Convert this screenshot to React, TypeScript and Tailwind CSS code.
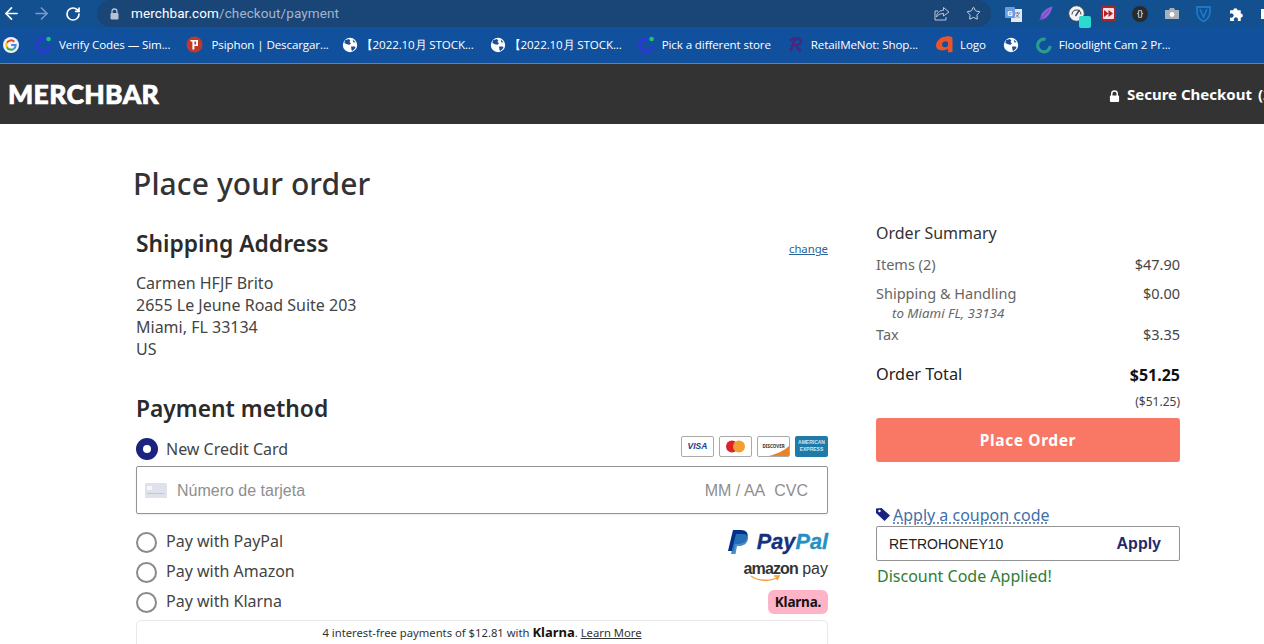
import React from "react";
import { ArrowLeft, ArrowRight, RotateCw, Star } from "lucide-react";

const Globe = () => (
  <svg width="16" height="16" viewBox="0 0 16 16" className="shrink-0">
    <circle cx="8" cy="8" r="7.2" fill="#fff" />
    <path d="M3 3.2 6.8 2l1.600 1.600-1 1.400 1.600 1.200-1.400 1.600-2.600-.6L2.400 6zM9 9.400l3.600.2 1 1.200-2.800 3-1.200-.4zM10.600 2.400l3 2.800-2.200.2z" fill="#1a4f96" />
  </svg>
);

const Swirl = ({ color = "#2d37d6", dot = "#22c07a" }: { color?: string; dot?: string }) => (
  <svg width="18" height="18" viewBox="0 0 18 18" className="shrink-0">
    <path d="M10.500 3.400A6.300 6.300 0 1 0 15.200 10" fill="none" stroke={color} strokeWidth="3.200" />
    <circle cx="14.600" cy="3" r="2.300" fill={dot} />
  </svg>
);

const GoogleG = () => (
  <svg width="16" height="16" viewBox="0 0 16 16" className="shrink-0">
    <circle cx="8" cy="8" r="8" fill="#f2f2f2" />
    <g fill="none" strokeWidth="2">
      <path d="M11.300 4.700A4.700 4.700 0 0 0 3.900 5.800" stroke="#ea4335" />
      <path d="M3.900 5.800a4.700 4.700 0 0 0 0 4.400" stroke="#fbbc05" />
      <path d="M3.900 10.200a4.700 4.700 0 0 0 7 1.500" stroke="#34a853" />
      <path d="M10.900 11.700A4.700 4.700 0 0 0 12.700 8H8.200" stroke="#4285f4" />
    </g>
  </svg>
);

const PsiphonIcon = () => (
  <svg width="17" height="17" viewBox="0 0 17 17" className="shrink-0">
    <circle cx="8.500" cy="8.500" r="8" fill="#c0392b" />
    <path d="M4.500 4h7.500v6H8.400v3.500H6.400V5.500H4.500zM8.400 5.500v3h1.700v-3z" fill="#fff" />
  </svg>
);

const RIcon = () => (
  <svg width="18" height="18" viewBox="0 0 18 18" className="shrink-0">
    <path d="M3 5c2-3 11-4 11 .5 0 2.500-3 3.500-6 3.700 2 1 3 5 6 5.300M8 3 3.500 15" fill="none" stroke="#47277f" strokeWidth="2.400" />
  </svg>
);

const LogoIcon = () => (
  <svg width="17" height="17" viewBox="0 0 17 17" className="shrink-0">
    <path d="M4 2.500C6 .8 11 .2 13 .2c2.500 0 3.500 1 3.500 3v12.600c-1.500.6-4 .8-4.500.2V13c-3 1.500-8 2.500-11-.5C-1 10 0 6 4 2.500z" fill="#e8552d" />
    <path d="M6 8.500c0-2 1.500-3.300 3.200-3.300 1 0 2 .4 2.800 1v3.800c-1 .8-2 1.300-3.200 1.300-1.700 0-2.800-1-2.800-2.800z" fill="#11509c" />
  </svg>
);

const Bookmark = ({ icon, label, gapClass }: { icon: React.ReactNode; label: string; gapClass: string }) => (
  <div className={`flex items-center ${gapClass}`}>
    {icon}
    <span className="whitespace-nowrap">{label}</span>
  </div>
);

const CardMark = ({ children, className }: { children: React.ReactNode; className: string }) => (
  <div className={`flex h-[21px] w-[33px] items-center justify-center overflow-hidden rounded-[2px] ${className}`}>{children}</div>
);

const Radio = ({ on = false }: { on?: boolean }) =>
  on ? (
    <span className="flex h-[22px] w-[22px] items-center justify-center rounded-full bg-[#1a237e]">
      <span className="h-2 w-2 rounded-full bg-white" />
    </span>
  ) : (
    <span className="h-[21px] w-[21px] rounded-full border-2 border-[#8a8a8a] bg-white" />
  );

const SummaryRow = ({ label, value, className = "" }: { label: string; value: string; className?: string }) => (
  <div className={`flex justify-between text-[14.500px] leading-[20px] ${className}`}>
    <span className="text-[#666]">{label}</span>
    <span className="text-[#444]">{value}</span>
  </div>
);

export default function App() {
  return (
    <div className="h-[644px] w-[1264px] overflow-hidden bg-white font-['Noto_Sans','Open_Sans',sans-serif] text-[#333]">
      {/* browser chrome */}
      <div className="flex h-[27px] items-center bg-[#12508f]">
        <div className="flex w-[97px] items-center pl-[2px] text-white">
          <ArrowLeft size={19} strokeWidth={2.200} />
          <ArrowRight size={19} strokeWidth={2} className="ml-[11px] text-[#7c9ccb]" />
          <RotateCw size={16} strokeWidth={2.600} className="ml-[14px]" />
        </div>
        <div className="flex h-[27px] w-[894px] items-center rounded-l-[14px] rounded-r-[14px] bg-[#1a4577] font-['Roboto',sans-serif] text-[13.500px] tracking-[0.100px]">
          <svg width="11" height="12" viewBox="0 0 11 12" className="ml-[12px] mr-[11px]">
            <path d="M3 5V3.500a2.500 2.500 0 0 1 5 0V5" fill="none" stroke="#b6c2d2" strokeWidth="1.300" />
            <rect x="1.500" y="5" width="8" height="6.500" rx="1" fill="#b6c2d2" />
          </svg>
          <span className="text-white">merchbar.com</span>
          <span className="text-[#a4b5cc]">/checkout/payment</span>
          <div className="ml-auto mr-[10px] flex items-center gap-[16px]">
            <svg width="16" height="15" viewBox="0 0 16 15" fill="none" stroke="#bac6d6" strokeWidth="1">
              <path d="M9.500 1.500 15 6l-5.500 4V7.500C6 7.500 3.500 9 2.500 11c0-4 3-6.500 7-6.800z" />
              <path d="M12 11v3H1V5h3" />
            </svg>
            <Star size={15} strokeWidth={1.500} className="text-[#d6dde8]" />
          </div>
        </div>
        <div className="relative flex flex-1 items-center gap-[16px] pl-[14px]">
          <svg width="17" height="16" viewBox="0 0 17 16" className="shrink-0">
            <rect x="6" y="3" width="11" height="13" fill="#e3e8f2" />
            <path d="M10 7h5M12.500 6v1.500M14 7.500c-1 2-2 3.500-3.500 4M11 8.500c1 1.500 2 2.500 3.500 3" fill="none" stroke="#5a6b86" strokeWidth="0.800" />
            <rect x="0" y="1" width="10" height="11" rx="1" fill="#6c9bde" />
            <text x="2.300" y="9.500" fontSize="8" fontWeight="700" fill="#fff" fontFamily="Roboto">G</text>
          </svg>
          <svg width="15" height="16" viewBox="0 0 15 16" className="shrink-0">
            <path d="M14.500.500C9 1.500 3 6 2.500 12L1 15.500l1.500-2C8 14 13 8 14.500.500z" fill="#8f5fd8" />
            <path d="M11 4 3 13" stroke="#5d3aa8" strokeWidth="0.700" />
          </svg>
          <span className="relative h-4 w-4 shrink-0">
            <svg width="17" height="17" viewBox="0 0 17 17" className="absolute -left-[1px] -top-[1px]">
              <circle cx="8.500" cy="8.500" r="7.800" fill="#f2f4f6" stroke="#3d4550" strokeWidth="0.900" />
              <path d="M4 9.500a4.500 4.500 0 0 1 9 0" fill="none" stroke="#3d4550" strokeWidth="1.100" />
              <path d="M7.500 11 11.500 5" stroke="#3d4550" strokeWidth="1.400" />
            </svg>
            <span className="absolute left-[10px] top-[10px] h-3 w-3 rounded-[2px] bg-[#2ed9cf]" />
          </span>
          <span className="flex h-[15px] w-[15px] shrink-0 items-center justify-center rounded-[3px] border-[2px] border-[#b3212c] bg-[#f4e3e4]">
            <svg width="9" height="7" viewBox="0 0 9 7"><path d="M0 0 4.500 3.500 0 7zM4.500 0 9 3.500 4.500 7z" fill="#b3212c" /></svg>
          </span>
          <span className="flex h-4 w-4 shrink-0 items-center justify-center rounded-full bg-[#2a2a2a] text-[8px] text-white">{"{}"}</span>
          <svg width="16" height="13" viewBox="0 0 16 13" className="shrink-0">
            <path d="M1 3h4l1-2h4l1 2h4v9H1z" fill="#a9b0b9" />
            <circle cx="8" cy="7.500" r="2.400" fill="#fff" />
          </svg>
          <svg width="15" height="16" viewBox="0 0 15 16" className="shrink-0">
            <path d="M1 1h13v5c0 4-3 8-6.500 9.500C4 14 1 10 1 6zM4 3l3.500 8L11 3" fill="none" stroke="#1c78c8" strokeWidth="1.800" />
          </svg>
          <svg width="16" height="16" viewBox="0 0 15 15" className="ml-[2px] shrink-0">
            <path d="M1 4h3a2 2 0 1 1 4 0h3v3a2 2 0 1 1 0 4v3H8a2 2 0 1 0-3 0H1v-3.500a2 2 0 1 0 0-3z" fill="#fff" />
          </svg>
          <span className="absolute right-0 top-[3px] h-[10px] w-[3px] bg-white" />
        </div>
      </div>
      <div className="flex h-[37px] items-center border-b border-[#5a83b8] bg-[#11509c] pl-[3px] font-['Open_Sans',sans-serif] text-[11.600px] tracking-[-0.120px] text-white">
        <GoogleG />
        <div className="ml-[15px]"><Bookmark icon={<Swirl />} label="Verify Codes — Sim..." gapClass="gap-[7px]" /></div>
        <div className="ml-[16px]"><Bookmark icon={<PsiphonIcon />} label="Psiphon | Descargar..." gapClass="gap-[8px]" /></div>
        <div className="ml-[13px]"><Bookmark icon={<Globe />} label="【2022.10月 STOCK..." gapClass="gap-[3px]" /></div>
        <div className="ml-[16px]"><Bookmark icon={<Globe />} label="【2022.10月 STOCK..." gapClass="gap-[3px]" /></div>
        <div className="ml-[15px]"><Bookmark icon={<Swirl />} label="Pick a different store" gapClass="gap-[7px]" /></div>
        <div className="ml-[16px]"><Bookmark icon={<RIcon />} label="RetailMeNot: Shop..." gapClass="gap-[6px]" /></div>
        <div className="ml-[18px]"><Bookmark icon={<LogoIcon />} label="Logo" gapClass="gap-[7px]" /></div>
        <div className="ml-[17px]"><Globe /></div>
        <div className="ml-[16px]"><Bookmark icon={<Swirl color="#2a9d8f" dot="transparent" />} label="Floodlight Cam 2 Pr..." gapClass="gap-[6px]" /></div>
      </div>

      {/* site header */}
      <div className="flex h-[60px] items-center justify-between overflow-hidden bg-[#333] pl-[8px] text-white">
        <span className="font-['Lato',sans-serif] text-[26.500px] font-black leading-none tracking-[0.350px] [-webkit-text-stroke:0.7px_white]">MERCHBAR</span>
        <div className="flex w-[155px] shrink-0 items-center gap-[7px] overflow-hidden">
          <svg width="11" height="14" viewBox="0 0 12 14" className="mt-[4px] shrink-0">
            <path d="M3 7V4.500a3 3 0 0 1 6 0V7" fill="none" stroke="#fff" strokeWidth="1.600" />
            <rect x="1" y="6.500" width="10" height="7" rx="1" fill="#fff" />
          </svg>
          <span className="whitespace-nowrap text-[15px] font-bold">Secure Checkout <span className="ml-[2px]">(2)</span></span>
        </div>
      </div>

      {/* page */}
      <div className="flex pl-[133px]">
        <div className="w-[695px]">
          <h1 className="mt-[39px] text-[30px] font-medium leading-[42px] tracking-[0.100px] text-[#333]">Place your order</h1>
          <div className="pl-[3px]">
            <div className="mt-[24px] flex items-end justify-between">
              <h2 className="text-[22.800px] font-semibold leading-[30px] text-[#2b2b2b]">Shipping Address</h2>
              <a className="mb-[1px] text-[11.300px] text-[#2a6496] underline">change</a>
            </div>
            <div className="mt-[13px] text-[16px] leading-[22px] text-[#444]">
              <div>Carmen HFJF Brito</div>
              <div>2655 Le Jeune Road Suite 203</div>
              <div>Miami, FL 33134</div>
              <div>US</div>
            </div>
            <h2 className="mt-[34px] text-[22.800px] font-semibold leading-[30px] text-[#2b2b2b]">Payment method</h2>

            <div className="relative mt-[13px] flex items-center justify-between">
              <div className="flex items-center gap-[8px] text-[16px] text-[#444]">
                <Radio on />
                <span>New Credit Card</span>
              </div>
              <div className="-mt-[6px] flex gap-[5px]">
                <CardMark className="border border-[#aaa] bg-white font-['Liberation_Sans',sans-serif] text-[8.500px] font-bold italic text-[#1a3a8a]">VISA</CardMark>
                <CardMark className="border border-[#aaa] bg-white">
                  <svg width="21" height="13" viewBox="0 0 21 13">
                    <circle cx="7" cy="6.500" r="6" fill="#d9222a" />
                    <circle cx="14" cy="6.500" r="6" fill="#f2a033" />
                  </svg>
                </CardMark>
                <CardMark className="relative border border-[#aaa] bg-white text-[4.500px] font-bold text-[#333]">
                  DISCOVER
                  <svg width="31" height="19" viewBox="0 0 31 19" className="absolute left-0 top-0">
                    <path d="M31 9C26 14 18 17 11 19h20z" fill="#e8832a" />
                  </svg>
                </CardMark>
                <CardMark className="bg-[#1f7aa8] text-center font-['Liberation_Sans',sans-serif] text-[5px] font-bold leading-[7px] text-[#cfe6f2]">AMERICAN<br />EXPRESS</CardMark>
              </div>
            </div>

            <div className="mt-[5px] flex h-[48px] items-center rounded-[2px] border border-[#949494] bg-white pl-[8px] pr-[19px] pt-[1px] font-['Liberation_Sans',sans-serif] text-[16px] text-[#8e8e8e] shadow-[0_1px_2px_rgba(0,0,0,0.08)]">
              <svg width="22" height="15" viewBox="0 0 22 15" className="mr-[10px]">
                <rect width="22" height="15" rx="1.500" fill="#dfe2ea" />
                <rect x="2" y="3" width="5" height="4" fill="#f6f7fa" />
                <rect x="2" y="10" width="17" height="1" fill="#c3c7d2" />
              </svg>
              <span>Número de tarjeta</span>
              <span className="ml-auto">MM / AA</span>
              <span className="ml-[9px]">CVC</span>
            </div>

            <div className="mt-[13px] flex h-[30px] items-center justify-between">
              <div className="flex items-center gap-[9px] text-[16px] text-[#444]">
                <Radio />
                <span className="-mt-[3px]">Pay with PayPal</span>
              </div>
              <div className="flex items-center gap-[8px] font-['Liberation_Sans',sans-serif] text-[21.700px] font-bold italic leading-none [-webkit-text-stroke:0.3px_currentColor]">
                <svg width="21" height="24" viewBox="0 0 21 24" className="-mt-[1px]">
                  <path d="M5 0h8c5 0 7.500 3 6.500 7-1 5-5 7-9 7H7L5.500 21H0z" fill="#003087" />
                  <path d="M8 4h7c3 0 5.500 1.500 5 5-1 5-5 7-8.500 7H9l-1.500 8H3l1-5z" fill="#2a7ac0" fillOpacity="0.85" />
                </svg>
                <span><span className="text-[#14307e]">Pay</span><span className="text-[#2790c3]">Pal</span></span>
              </div>
            </div>
            <div className="flex h-[30px] items-center justify-between">
              <div className="flex items-center gap-[9px] text-[16px] text-[#444]">
                <Radio />
                <span className="-mt-[2px]">Pay with Amazon</span>
              </div>
              <div className="relative -mt-[7px] font-['Liberation_Sans',sans-serif] text-[16px] leading-none text-[#333]">
                <span className="font-bold tracking-[-0.900px]">amazon</span> <span className="font-normal">pay</span>
                <svg width="30" height="8" viewBox="0 0 30 8" className="absolute left-[6px] top-[14px]">
                  <path d="M1 1c7 5 19 6 27 1M24 1l5 0-2 4" fill="none" stroke="#f29d38" strokeWidth="1.400" />
                </svg>
              </div>
            </div>
            <div className="flex h-[30px] items-center justify-between">
              <div className="flex items-center gap-[9px] text-[16px] text-[#444]">
                <Radio />
                <span className="-mt-[2px]">Pay with Klarna</span>
              </div>
              <span className="flex h-[24px] w-[60px] items-center justify-center rounded-[6px] bg-[#ffb3c7] text-[13.500px] font-bold tracking-[-0.200px] text-[#17120f]">Klarna.</span>
            </div>
            <div className="mt-[3px] flex h-[40px] items-start justify-center rounded-[5px] border border-[#e8e8e8] pt-[2px] text-[11.250px] leading-[18px] text-[#333]">
              <span>4 interest-free payments of $12.81 with <b className="text-[13px] text-[#17120f]">Klarna</b>. <u>Learn More</u></span>
            </div>
          </div>
        </div>

        {/* summary */}
        <div className="ml-[48px] w-[304px]">
          <div className="mt-[97px] text-[16px] leading-[24px] text-[#333]">Order Summary</div>
          <SummaryRow label="Items (2)" value="$47.90" className="mt-[9px]" />
          <SummaryRow label="Shipping & Handling" value="$0.00" className="mt-[9px]" />
          <div className="pl-[16px] text-[13.300px] italic leading-[20px] text-[#666]">to Miami FL, 33134</div>
          <SummaryRow label="Tax" value="$3.35" className="mt-[1px]" />
          <div className="mt-[19px] flex items-center justify-between leading-[24px]">
            <span className="-mt-[2px] text-[16.300px] text-[#222]">Order Total</span>
            <span className="text-[16px] font-bold text-[#111]">$51.25</span>
          </div>
          <div className="mt-[5px] text-right text-[12px] leading-[20px] text-[#444]">($51.25)</div>
          <div className="mt-[6px] flex h-[44px] items-center justify-center rounded-[3px] bg-[#f97865] pt-[1px] text-[15.500px] font-bold tracking-[0.600px] text-white">Place Order</div>
          <div className="mt-[43px] flex items-center">
            <svg width="14" height="14" viewBox="0 0 14 14" className="-mt-[3px] mr-[3px]">
              <path d="M0 1.500 5.500 1 14 8.500 8.500 14 0 6z" fill="#1a237e" />
              <circle cx="3.500" cy="4" r="1.200" fill="#fff" />
            </svg>
            <span className="text-[16px] leading-[20px] text-[#3f6fa8] underline decoration-dotted underline-offset-2">Apply a coupon code</span>
          </div>
          <div className="mt-[1px] flex h-[35px] items-center justify-between rounded-[2px] border border-[#949494] pl-[12px] pr-[18px] font-['Liberation_Sans',sans-serif] leading-none">
            <span className="text-[14px] text-[#222]">RETROHONEY10</span>
            <span className="mt-[1px] text-[16px] font-bold text-[#1f2a6e]">Apply</span>
          </div>
          <div className="mt-[4px] pl-[1px] text-[16px] leading-[22px] text-[#2e7d32]">Discount Code Applied!</div>
        </div>
      </div>
    </div>
  );
}
